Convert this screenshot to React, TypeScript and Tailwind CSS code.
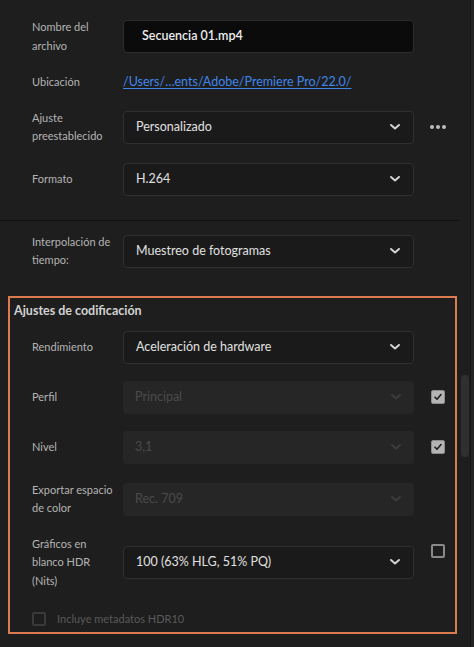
import React from "react";

const font = { fontFamily: "Lato, 'Open Sans', sans-serif" };

function Chevron({ disabled }: { disabled?: boolean }) {
  return (
    <svg width="12" height="8" viewBox="0 0 12 8" fill="none">
      <path
        d="M2 2l4 3.5L10 2"
        stroke={disabled ? "#3d3d3d" : "#d4d4d4"}
        strokeWidth="2"
        strokeLinecap="round"
        strokeLinejoin="round"
      />
    </svg>
  );
}

function Dropdown({ value, disabled }: { value: string; disabled?: boolean }) {
  return (
    <div
      className={`flex h-[33px] w-[291px] shrink-0 items-center justify-between rounded-[4px] pl-[12px] pr-[12px] text-[12.5px] ${
        disabled
          ? "bg-[#262626] text-[#4b4b4b]"
          : "border border-[#2f2f2f] bg-[#1a1a1a] text-[#e0e0e0]"
      }`}
    >
      <span>{value}</span>
      <Chevron disabled={disabled} />
    </div>
  );
}

function Checkbox({ checked, disabled }: { checked?: boolean; disabled?: boolean }) {
  if (checked) {
    return (
      <div className="flex h-[14px] w-[14px] items-center justify-center rounded-[2px] border border-[#8c8c8c] bg-[#b4b4b4]">
        <svg width="10" height="10" viewBox="0 0 10 10" fill="none">
          <path d="M2 5.2l2 2L8 2.6" stroke="#1e1e1e" strokeWidth="1.6" strokeLinecap="round" strokeLinejoin="round" />
        </svg>
      </div>
    );
  }
  return (
    <div
      className={`h-[14px] w-[14px] rounded-[2px] border-2 ${
        disabled ? "border-[#3a3a3a]" : "border-[#8a8a8a]"
      }`}
    />
  );
}

function Label({ children }: { children: React.ReactNode }) {
  return (
    <div className="w-[91px] shrink-0 text-[11px] leading-[18.5px] text-[#b4b4b4]">{children}</div>
  );
}

export default function App() {
  return (
    <div className="flex h-[647px] w-[474px] overflow-hidden bg-[#1e1e1e]" style={font}>
      <div className="flex w-[459px] shrink-0 flex-col">
        {/* Top section */}
        <div className="flex flex-col pl-[32px] pt-[18px]">
          <div className="flex items-center">
            <Label>
              Nombre del
              <br />
              archivo
            </Label>
            <div className="flex h-[33px] w-[291px] items-center rounded-[4px] border border-[#2c2c2c] bg-[#0b0b0b] pl-[18px] text-[12.5px] font-semibold text-[#ececec]">
              Secuencia 01.mp4
            </div>
          </div>

          <div className="mt-[18px] flex items-center">
            <Label>Ubicación</Label>
            <span className="text-[12.5px] text-[#3f86ea] underline underline-offset-2">
              /Users/…ents/Adobe/Premiere Pro/22.0/
            </span>
          </div>

          <div className="mt-[17px] flex items-center">
            <Label>
              Ajuste
              <br />
              preestablecido
            </Label>
            <Dropdown value="Personalizado" />
            <div className="ml-[16px] flex gap-[2px]">
              <span className="h-[4px] w-[4px] rounded-full bg-[#bdbdbd]" />
              <span className="h-[4px] w-[4px] rounded-full bg-[#bdbdbd]" />
              <span className="h-[4px] w-[4px] rounded-full bg-[#bdbdbd]" />
            </div>
          </div>

          <div className="mt-[17px] flex items-center">
            <Label>Formato</Label>
            <Dropdown value="H.264" />
          </div>
        </div>

        <div className="mt-[24px] h-px w-full bg-[#121212]" />

        <div className="mt-[12px] flex items-center pl-[32px]">
          <Label>
            Interpolación de
            <br />
            tiempo:
          </Label>
          <Dropdown value="Muestreo de fotogramas" />
        </div>

        {/* Encoding settings */}
        <div className="ml-[8px] mt-[26px] flex w-[449px] flex-col border-2 border-[#dc7b50] pb-[4px]">
          <div className="pl-[4px] pt-[4px] text-[12.5px] font-bold text-[#d2d2d2]">
            Ajustes de codificación
          </div>

          <div className="mt-[10px] flex flex-col gap-[17px] pl-[22px]">
            <div className="flex items-center">
              <Label>Rendimiento</Label>
              <Dropdown value="Aceleración de hardware" />
            </div>

            <div className="flex items-center">
              <Label>Perfil</Label>
              <Dropdown value="Principal" disabled />
              <div className="ml-[17px]">
                <Checkbox checked />
              </div>
            </div>

            <div className="flex items-center">
              <Label>Nivel</Label>
              <Dropdown value="3,1" disabled />
              <div className="ml-[17px]">
                <Checkbox checked />
              </div>
            </div>

            <div className="flex items-center">
              <Label>
                Exportar espacio
                <br />
                de color
              </Label>
              <Dropdown value="Rec. 709" disabled />
            </div>

            <div className="flex items-center">
              <Label>
                Gráficos en
                <br />
                blanco HDR
                <br />
                (Nits)
              </Label>
              <Dropdown value="100 (63% HLG, 51% PQ)" />
              <div className="ml-[17px] self-start pt-[9px]">
                <Checkbox />
              </div>
            </div>

            <div className="mt-[4px] flex items-center gap-[11px]">
              <Checkbox disabled />
              <span className="text-[11px] text-[#5a5a5a]">Incluye metadatos HDR10</span>
            </div>
          </div>
        </div>
      </div>

      {/* Scrollbar */}
      <div className="flex w-[11px] shrink-0 flex-col items-center">
        <div className="mt-[375px] h-[82px] w-[8px] rounded-full bg-[#2f2f2f]" />
      </div>
      <div className="w-[4px] shrink-0 border-l border-[#141414] bg-[#232323]" />
    </div>
  );
}
